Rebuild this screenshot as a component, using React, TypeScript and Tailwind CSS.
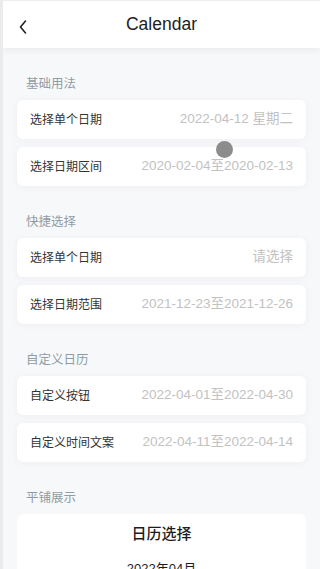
import React from 'react'

const font = { fontFamily: '"Liberation Sans", "Noto Sans CJK SC", sans-serif' }

type Row = { label: string; value: string }

const sections: { title: string; rows: Row[] }[] = [
  {
    title: '基础用法',
    rows: [
      { label: '选择单个日期', value: '2022-04-12 星期二' },
      { label: '选择日期区间', value: '2020-02-04至2020-02-13' },
    ],
  },
  {
    title: '快捷选择',
    rows: [
      { label: '选择单个日期', value: '请选择' },
      { label: '选择日期范围', value: '2021-12-23至2021-12-26' },
    ],
  },
  {
    title: '自定义日历',
    rows: [
      { label: '自定义按钮', value: '2022-04-01至2022-04-30' },
      { label: '自定义时间文案', value: '2022-04-11至2022-04-14' },
    ],
  },
]

function Cell({ label, value }: Row) {
  return (
    <div className="flex h-[39px] items-center justify-between rounded-md bg-white px-[13px] shadow-[0_1px_7px_rgba(237,238,241,1)]">
      <span className="text-[12px] text-[#333333]">{label}</span>
      <span className="text-[13.5px] text-[#c2c2c2]">{value}</span>
    </div>
  )
}

function SectionTitle({ children }: { children: React.ReactNode }) {
  return (
    <h2 className="pl-[9px] pt-[28px] pb-[8px] text-[12.5px] leading-[16px] text-[#909ca4]">
      {children}
    </h2>
  )
}

export default function App() {
  return (
    <div
      style={font}
      className="relative h-[569px] w-[320px] overflow-hidden border-l-[3px] border-[#ebebeb] bg-[#f7f8fa]"
    >
      <header className="relative flex h-[48px] items-center justify-center border-t border-[#eeeeee] bg-white shadow-[0_2px_6px_rgba(230,230,230,0.8)]">
        <button className="absolute left-[15px] top-[18px] text-[#333]">
          <svg width="10" height="16" viewBox="0 0 10 16" fill="none">
            <path d="M7.5 2 L2.5 8 L7.5 14" stroke="#222" strokeWidth="1.6" strokeLinecap="round" strokeLinejoin="round" />
          </svg>
        </button>
        <h1 className="text-[17.5px] font-medium text-[#1d1d1d]">Calendar</h1>
      </header>

      <main className="px-[14px]">
        {sections.map((s) => (
          <section key={s.title}>
            <SectionTitle>{s.title}</SectionTitle>
            <div className="flex flex-col gap-2">
              {s.rows.map((r) => (
                <Cell key={r.label + r.value} {...r} />
              ))}
            </div>
          </section>
        ))}

        <section>
          <SectionTitle>平铺展示</SectionTitle>
          <div className="flex flex-col items-center rounded-t-md bg-white pt-[9px]">
            <div className="text-[15px] font-medium leading-[22px] text-[#1d1d1d]">日历选择</div>
            <div className="mt-[15px] text-[13px] leading-[18px] text-[#1d1d1d]">2022年04月</div>
          </div>
        </section>
      </main>

      <div className="absolute left-[213px] top-[141px] h-[17px] w-[17px] rounded-full bg-[#8c8c8c]" />
    </div>
  )
}
